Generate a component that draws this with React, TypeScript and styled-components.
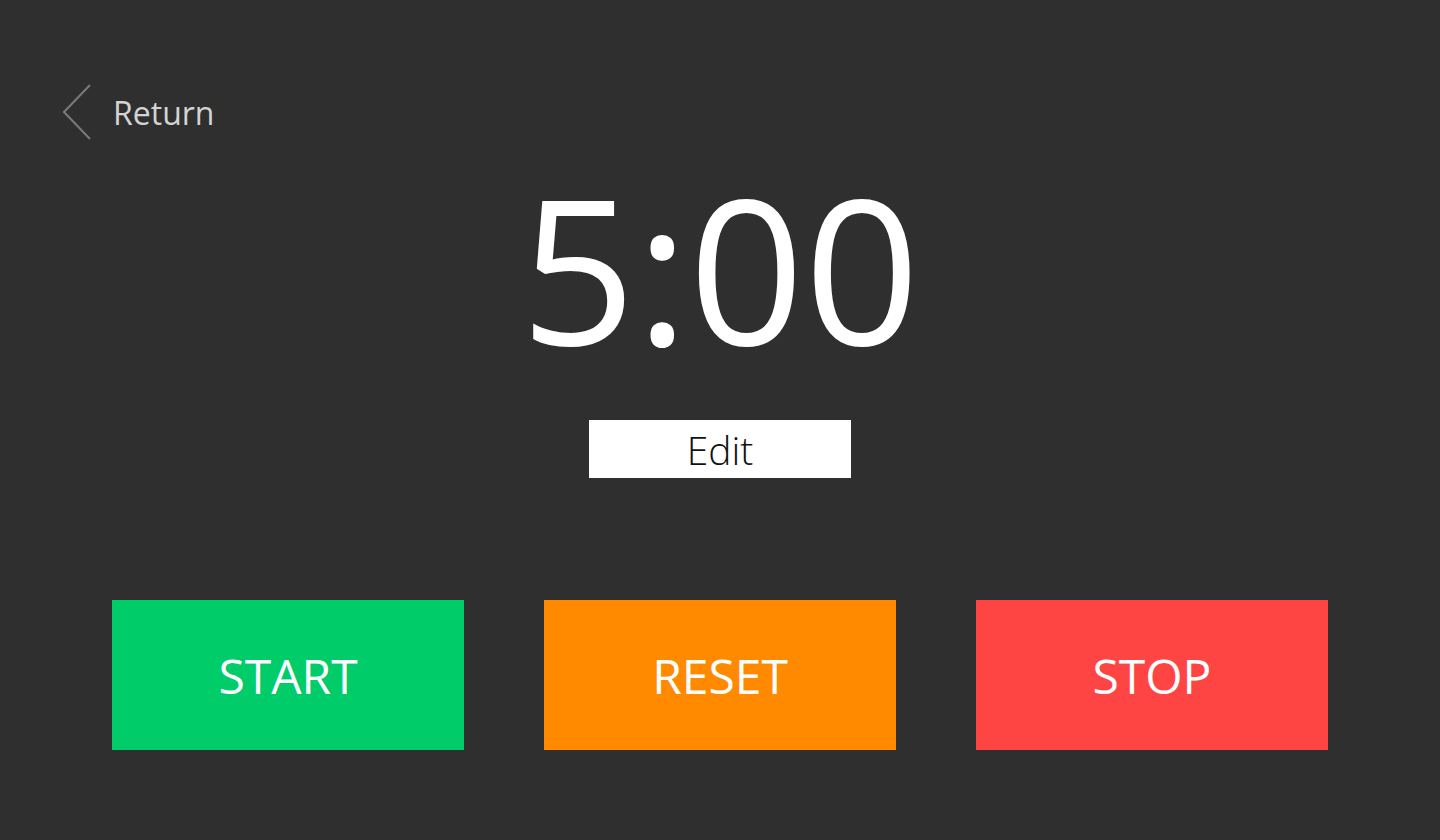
import styled, { createGlobalStyle } from "styled-components";

const GlobalStyle = createGlobalStyle`
  * {
    box-sizing: border-box;
  }
  body {
    margin: 0;
    background: #2f2f2f;
    font-family: "Open Sans", "Noto Sans", sans-serif;
  }
`;

type Variant = "start" | "reset" | "stop";

const colors: Record<Variant, string> = {
  start: "#00cc6a",
  reset: "#ff8a00",
  stop: "#ff4444",
};

const actions: { key: Variant; label: string }[] = [
  { key: "start", label: "START" },
  { key: "reset", label: "RESET" },
  { key: "stop", label: "STOP" },
];

export default function App() {
  return (
    <>
      <GlobalStyle />
      <Page>
        <Header>
          <BackButton type="button">
            <svg width="28" height="56" viewBox="0 0 28 56" fill="none">
              <path
                d="M27 1 L1 28 L27 55"
                stroke="#7a7a7a"
                strokeWidth="2"
                strokeLinejoin="miter"
              />
            </svg>
            <BackLabel>Return</BackLabel>
          </BackButton>
        </Header>
        <Timer>5:00</Timer>
        <EditButton type="button">Edit</EditButton>
        <Actions>
          {actions.map((a) => (
            <ActionButton key={a.key} type="button" $color={colors[a.key]}>
              {a.label}
            </ActionButton>
          ))}
        </Actions>
      </Page>
    </>
  );
}

const Page = styled.div`
  min-height: 840px;
  width: 1440px;
  padding-top: 84px;
  display: flex;
  flex-direction: column;
  align-items: center;
  background: #2f2f2f;
`;

const Header = styled.header`
  align-self: stretch;
  padding-left: 63px;
  display: flex;
  align-items: center;
`;

const BackButton = styled.button`
  display: flex;
  align-items: center;
  gap: 22px;
  padding: 0;
  border: none;
  background: none;
  cursor: pointer;
`;

const BackLabel = styled.span`
  font-family: "Open Sans", sans-serif;
  font-size: 32px;
  color: #d4d4d4;
  line-height: 1;
  margin-top: 2px;
`;

const Timer = styled.div`
  margin-top: 26px;
  font-family: "Open Sans", sans-serif;
  font-size: 202px;
  font-weight: 400;
  line-height: 1;
  color: #ffffff;
`;

const EditButton = styled.button`
  margin-top: 52px;
  width: 262px;
  height: 58px;
  border: none;
  background: #ffffff;
  color: #111111;
  font-family: "Open Sans", sans-serif;
  font-size: 39px;
  font-weight: 300;
  line-height: 1;
  padding: 0;
  cursor: pointer;
`;

const Actions = styled.div`
  margin-top: 122px;
  display: flex;
  gap: 80px;
`;

const ActionButton = styled.button<{ $color: string }>`
  width: 352px;
  height: 150px;
  border: none;
  padding: 0;
  background: ${(p) => p.$color};
  color: #ffffff;
  font-family: "Open Sans", sans-serif;
  font-size: 48px;
  font-weight: 400;
  cursor: pointer;
`;
